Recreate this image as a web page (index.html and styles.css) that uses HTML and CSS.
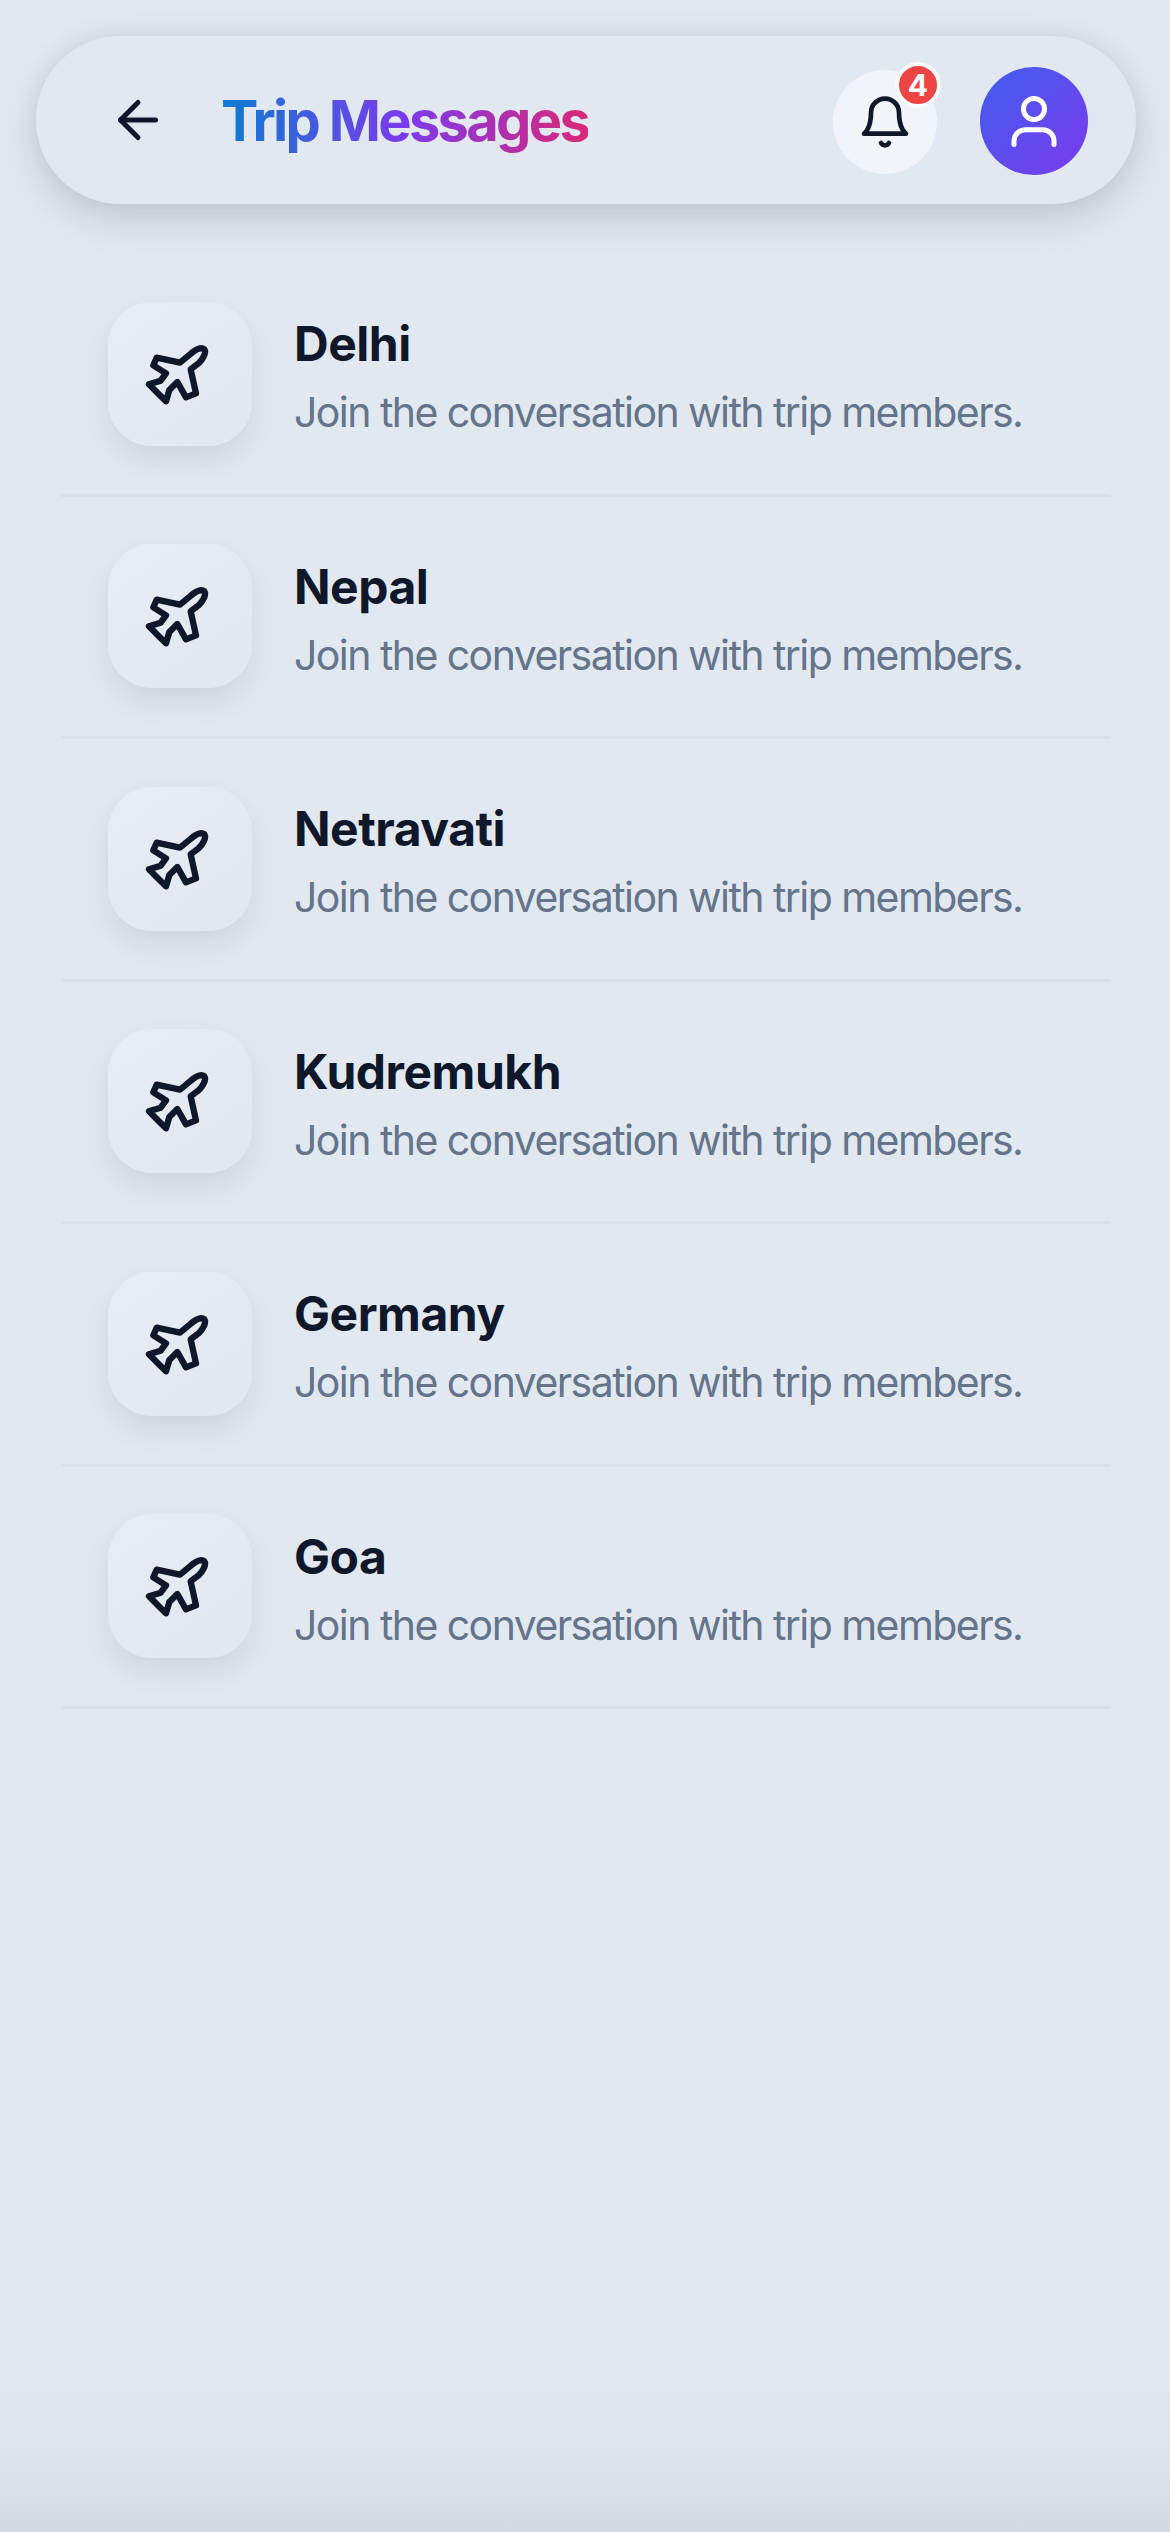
FILE: index.html
```html
<!DOCTYPE html>
<html lang="en">
<head>
<meta charset="utf-8">
<title>Trip Messages</title>
<link rel="stylesheet" href="styles.css">
</head>
<body>
<main class="page">
  <svg width="0" height="0" class="defs" aria-hidden="true">
    <symbol id="plane" viewBox="120 132 240 240"><path d="M270 193C285 180 303 170 313 178C320 188 308 208 296 220L272 238L288 310L258 322L232 276L208 300L198 334L178 314L147 283L182 272L198 250L160 226L170 203L240 218Z"/></symbol>
  </svg>
  <header class="topbar">
    <button class="back" aria-label="Back">
      <svg class="icon icon-60" viewBox="0 0 24 24"><path d="M12 19l-7-7 7-7"/><path d="M19 12H5"/></svg>
    </button>
    <h1 class="title">Trip Messages</h1>
    <div class="bell">
      <svg class="icon icon-56" viewBox="0 0 24 24"><path d="M6 8a6 6 0 0 1 12 0c0 7 3 9 3 9H3s3-2 3-9"/><path d="M10.3 21a1.94 1.94 0 0 0 3.4 0"/></svg>
      <span class="badge">4</span>
    </div>
    <div class="avatar">
      <svg class="icon icon-60 icon-white" viewBox="0 0 24 24"><circle cx="12" cy="7.2" r="4.2"/><path d="M4 21.4v-1.4a4.5 4.5 0 0 1 4.5-4.5h7a4.5 4.5 0 0 1 4.5 4.5v1.4"/></svg>
    </div>
  </header>
  <ul class="list">
    <li class="row"><div class="tile"><svg class="icon icon-plane"><use href="#plane"/></svg></div><div class="text"><h2 class="name">Delhi</h2><p class="sub">Join the conversation with trip members.</p></div></li>
    <li class="row"><div class="tile"><svg class="icon icon-plane"><use href="#plane"/></svg></div><div class="text"><h2 class="name">Nepal</h2><p class="sub">Join the conversation with trip members.</p></div></li>
    <li class="row"><div class="tile"><svg class="icon icon-plane"><use href="#plane"/></svg></div><div class="text"><h2 class="name">Netravati</h2><p class="sub">Join the conversation with trip members.</p></div></li>
    <li class="row"><div class="tile"><svg class="icon icon-plane"><use href="#plane"/></svg></div><div class="text"><h2 class="name">Kudremukh</h2><p class="sub">Join the conversation with trip members.</p></div></li>
    <li class="row"><div class="tile"><svg class="icon icon-plane"><use href="#plane"/></svg></div><div class="text"><h2 class="name">Germany</h2><p class="sub">Join the conversation with trip members.</p></div></li>
    <li class="row"><div class="tile"><svg class="icon icon-plane"><use href="#plane"/></svg></div><div class="text"><h2 class="name">Goa</h2><p class="sub">Join the conversation with trip members.</p></div></li>
  </ul>
  <div class="fade"></div>
</main>
</body>
</html>
```
FILE: styles.css
```css
* { box-sizing: border-box; }
html, body { margin: 0; padding: 0; }
body {
  background: #e2e8f0;
  font-family: Inter, "Liberation Sans", sans-serif;
  color: #0f172a;
}
.page {
  width: 1170px;
  height: 2532px;
  display: flex;
  flex-direction: column;
  overflow: hidden;
}
.defs { display: block; height: 0; }
.icon {
  fill: none;
  stroke: #0f172a;
  stroke-width: 2;
  stroke-linecap: round;
  stroke-linejoin: round;
  display: block;
}
.icon-white { stroke: #fff; }
.icon-56 { width: 56px; height: 56px; }
.icon-60 { width: 60px; height: 60px; }
.icon-plane { width: 80px; height: 80px; stroke-width: 19; }

.topbar {
  flex: none;
  margin: 36px 34px 0 36px;
  height: 168px;
  border-radius: 84px;
  background: #e2e8f0;
  box-shadow: 0 16px 38px rgba(15, 23, 42, 0.14), 0 -4px 28px rgba(15, 23, 42, 0.05);
  display: flex;
  align-items: center;
  padding-left: 72px;
}
.back {
  width: 60px;
  height: 60px;
  padding: 0;
  border: 0;
  background: none;
  flex: none;
}
.title {
  margin: 3px 0 0 53px;
  font-size: 56px;
  font-weight: 700;
  letter-spacing: -0.048em;
  line-height: 1.2;
  background: linear-gradient(90deg, #0b7cd2 0%, #7c3aed 50%, #db2777 100%);
  -webkit-background-clip: text;
  background-clip: text;
  color: transparent;
}
.bell {
  position: relative;
  margin: 3px 0 0 auto;
  width: 104px;
  height: 104px;
  border-radius: 50%;
  background: #f1f5f9;
  display: flex;
  align-items: center;
  justify-content: center;
}
.badge {
  position: absolute;
  top: -8px;
  right: -4px;
  width: 46px;
  height: 46px;
  border-radius: 50%;
  background: #ef4444;
  border: 4px solid #f8fafc;
  color: #fff;
  font-size: 30px;
  font-weight: 700;
  display: flex;
  align-items: center;
  justify-content: center;
}
.avatar {
  width: 108px;
  height: 108px;
  margin: 1px 48px 0 43px;
  border-radius: 50%;
  background: linear-gradient(135deg, #3f5eef, #7c3aed);
  display: flex;
  align-items: center;
  justify-content: center;
  flex: none;
}

.list {
  list-style: none;
  margin: 50px 59px 0 61px;
  padding: 0;
  flex: none;
}
.row {
  height: 242.5px;
  padding: 48px 0 48px 47px;
  border-bottom: 3px solid #dbe0e8;
  display: flex;
  align-items: center;
  gap: 42px;
}
.tile {
  width: 144px;
  height: 144px;
  flex: none;
  border-radius: 44px;
  background: linear-gradient(145deg, #e8ecf4, #e2e8f0);
  box-shadow: 0 14px 28px rgba(15, 23, 42, 0.09);
  display: flex;
  align-items: center;
  justify-content: center;
}
.text { padding-top: 6px; }
.name {
  margin: 0;
  font-size: 48px;
  font-weight: 700;
  line-height: 56px;
  letter-spacing: -0.01em;
  color: #0f172a;
}
.sub {
  margin: 15px 0 0;
  font-size: 41px;
  font-weight: 400;
  line-height: 50px;
  letter-spacing: -0.038em;
  color: #64748b;
  white-space: nowrap;
}
.fade {
  margin-top: auto;
  height: 147px;
  flex: none;
  background: linear-gradient(180deg, #e2e6ef 0%, #e0e5ed 35%, #dbe1e9 65%, #d3d9e2 100%);
}
```
